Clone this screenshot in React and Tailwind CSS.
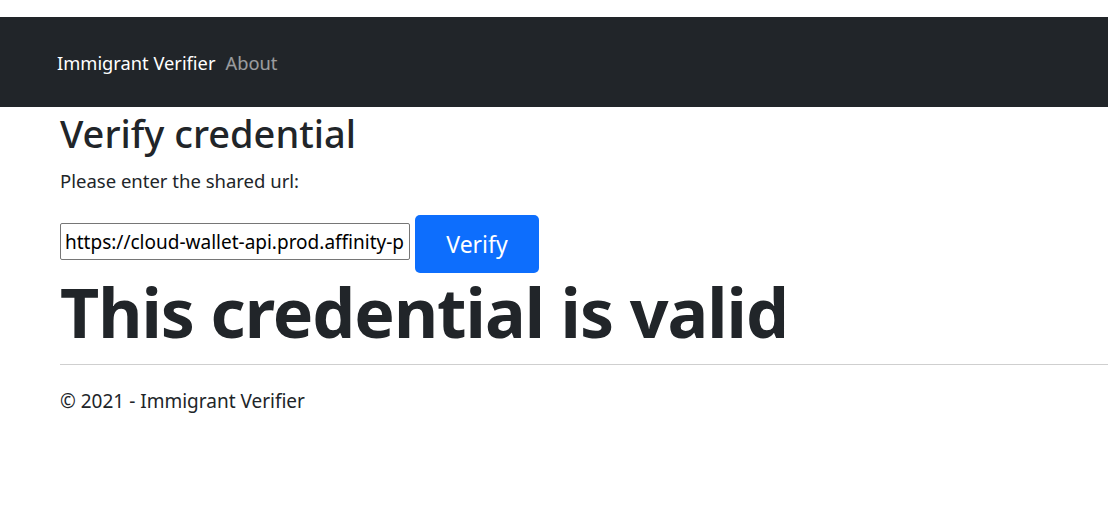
export default function App() {
  const font = { fontFamily: '"Segoe UI", "Noto Sans", "Open Sans", sans-serif' };
  return (
    <div className="min-h-[511px] bg-white text-[#212529]" style={font}>
      <div className="h-[17px]" />
      <nav className="h-[90px] bg-[#212529] flex items-center px-[57px] pt-[1px] gap-[10px]">
        <span className="text-[18.3px] text-white">Immigrant Verifier</span>
        <span className="text-[18.3px] text-white/55">About</span>
      </nav>
      <main className="px-[60px]">
        <h1 className="text-[38px] font-medium leading-[1.2] mt-[4px]">Verify credential</h1>
        <p className="text-[18.5px] leading-[1.5] mt-[10px]">Please enter the shared url:</p>
        <div className="flex items-start gap-[5px] mt-[21px]">
          <input
            readOnly
            value="https://cloud-wallet-api.prod.affinity-project.org/api/v1/share/abc"
            className="w-[350px] h-[37px] mt-[8px] border border-[#767676] rounded-[2px] px-[4px] text-[19px] text-black outline-none"
            style={font}
          />
          <button className="w-[124px] h-[58px] bg-[#0d6efd] text-white text-[23px] rounded-[5px]" style={font}>
            Verify
          </button>
        </div>
        <h2 className="text-[68px] font-bold leading-[1.1] tracking-[-1px] mt-[2px]">This credential is valid</h2>
      </main>
      <hr className="ml-[60px] mt-[14px] border-t border-[#cfcfcf]" />
      <footer className="px-[60px] pt-[22px] text-[19px]">© 2021 - Immigrant Verifier</footer>
    </div>
  );
}
